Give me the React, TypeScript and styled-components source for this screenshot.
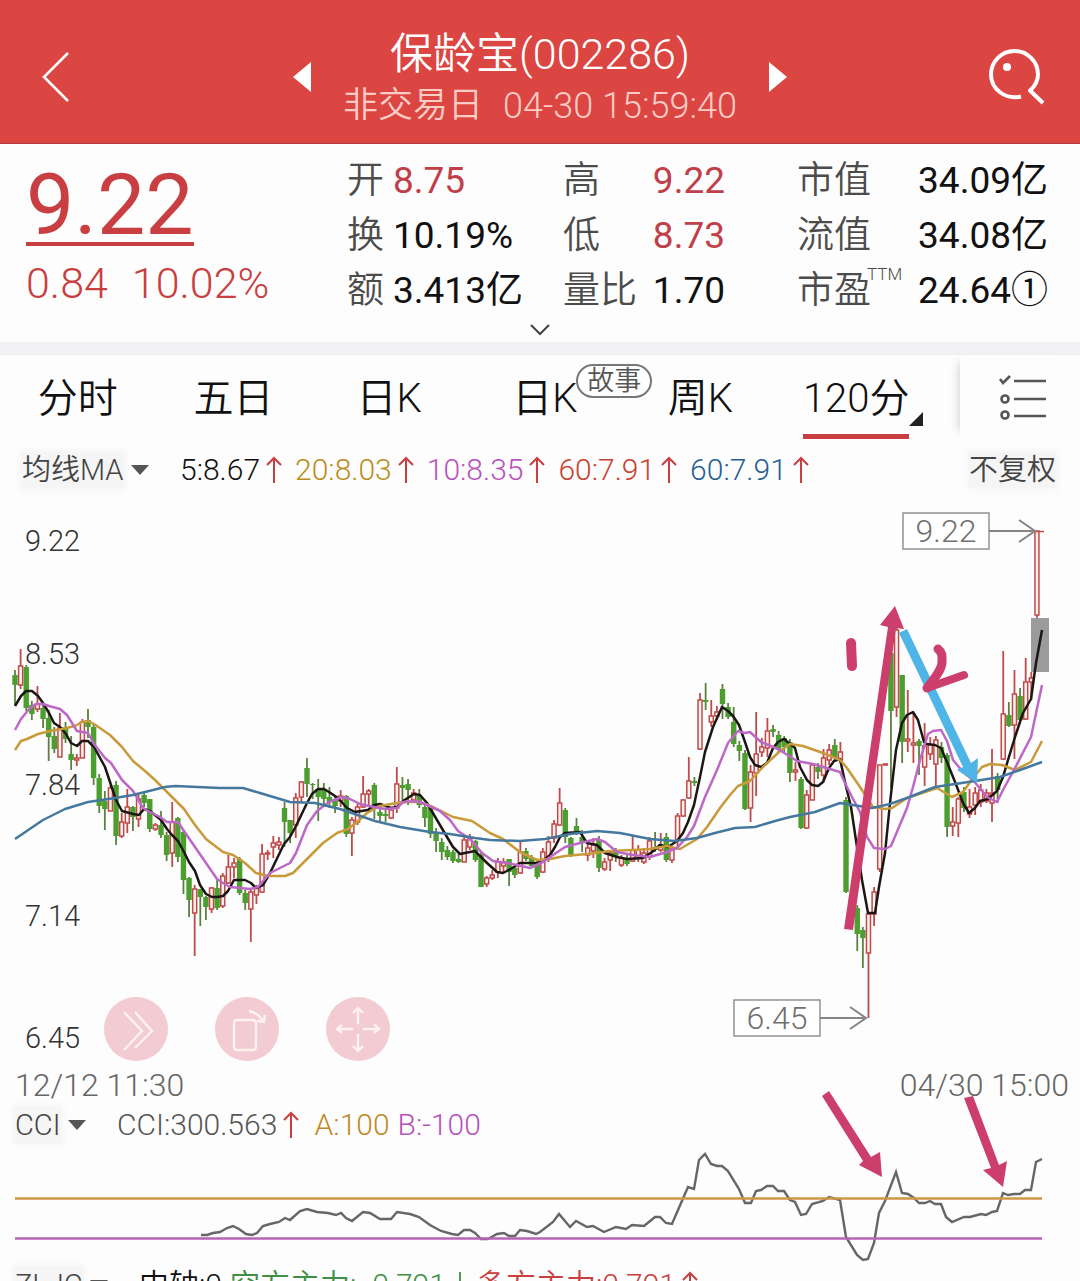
import React from "react";
import styled, { createGlobalStyle } from "styled-components";

const GlobalStyle = createGlobalStyle`
  *, *::before, *::after { box-sizing: border-box; }
  body { margin: 0; background: #fdfdfd; }
  button, select { font: inherit; color: inherit; background: none; border: 0; padding: 0; margin: 0; }
  button, select { cursor: pointer; }
  svg { display: block; }
`;

const red = "#c93f41";
const pink = "#cc3e6c";

const Page = styled.main`
  height: 100vh;
  overflow: hidden;
  background: #fdfdfd;
  color: #111;
  font-family: Roboto, "Noto Sans CJK SC", sans-serif;
  font-size: 29px;
  line-height: 40px;
`;

/* ---------- header ---------- */

const Header = styled.header`
  display: grid;
  grid-template-columns: 120px 1fr 120px;
  align-items: center;
  height: 144px;
  padding-top: 10px;
  background: #db4542;
  border-bottom: 1px solid #b23a45;
  color: #fff;
`;

const HeaderButton = styled.button<{ $end?: boolean }>`
  display: flex;
  justify-content: ${(p) => (p.$end ? "flex-end" : "flex-start")};
  padding: 0 35px 0 42px;
  svg { flex: none; }
`;

const Switcher = styled.div`
  display: flex;
  align-items: center;
  justify-content: center;
  gap: 32px;
`;

const TitleBlock = styled.div`
  padding-top: 3px;
  text-align: center;
`;

const Title = styled.h1`
  margin: 0;
  font-size: 43px;
  font-weight: 350;
  line-height: 56px;
`;

const Subtitle = styled.p`
  display: flex;
  justify-content: center;
  gap: 20px;
  margin: 0;
  color: #fcccc5;
  font-size: 35px;
  font-weight: 350;
  line-height: 48px;
  time { font-size: 36px; }
`;

/* ---------- quote ---------- */

const Quote = styled.section`
  display: grid;
  grid-template-columns: 321fr 701fr;
  padding: 8px 32px 0 26px;
`;

const PriceBlock = styled.div`
  display: flex;
  flex-direction: column;
  align-items: flex-start;
  padding-top: 16px;
  color: ${red};
`;

const Price = styled.strong`
  border-bottom: 4px solid ${red};
  font-size: 86px;
  font-weight: 400;
  line-height: 74px;
`;

const Change = styled.div`
  display: flex;
  gap: 24px;
  margin-top: 11px;
  font-size: 43px;
  font-weight: 350;
  line-height: 52px;
`;

const Stats = styled.div`
  display: grid;
  grid-template-columns: 216fr 234fr 251fr;
  padding-top: 1px;
`;

const StatColumn = styled.dl<{ $right?: number; $spread?: boolean }>`
  margin: 0;
  padding-right: ${(p) => p.$right ?? 0}px;
  div { justify-content: ${(p) => (p.$spread ? "space-between" : "flex-start")}; }
`;

const Stat = styled.div`
  display: flex;
  gap: 9px;
  font-size: 37px;
  line-height: 55px;
`;

const StatLabel = styled.dt`
  position: relative;
  color: #4c4c4c;
  font-weight: 350;
`;

const StatValue = styled.dd<{ $up?: boolean }>`
  margin: 0;
  color: ${(p) => (p.$up ? "#c0404a" : "#111")};
  white-space: nowrap;
`;

const Super = styled.sup`
  position: absolute;
  left: 70px;
  top: 1px;
  font-size: 17px;
  line-height: 20px;
`;

const ExpandButton = styled.button`
  display: flex;
  justify-content: center;
  width: 100%;
  height: 24px;
  padding-top: 6px;
`;

const Divider = styled.hr`
  height: 13px;
  margin: 0;
  border: 0;
  background: #f1f0f5;
`;

/* ---------- period tabs ---------- */

const TabBar = styled.nav`
  display: grid;
  grid-template-columns: 1fr 120px;
  height: 84px;
`;

const Tabs = styled.div`
  display: grid;
  grid-template-columns: repeat(6, 1fr);
  padding-right: 26px;
`;

const Tab = styled.button`
  display: flex;
  justify-content: center;
  font-size: 40px;
  font-weight: 350;
  line-height: 88px;
`;

const TabText = styled.span<{ $active?: boolean }>`
  position: relative;
  height: 84px;
  border-bottom: 5px solid ${(p) => (p.$active ? red : "transparent")};
`;

const TabBadge = styled.span`
  position: absolute;
  left: 64px;
  top: 9px;
  width: 76px;
  border: 2px solid #777;
  border-radius: 17px;
  color: #555;
  font-size: 27px;
  line-height: 30px;
`;

const Corner = styled.i`
  position: absolute;
  right: -14px;
  bottom: 8px;
  border-left: 14px solid transparent;
  border-bottom: 14px solid #222;
`;

const MenuButton = styled.button`
  display: flex;
  align-items: center;
  justify-content: center;
  padding-left: 5px;
  background: #fdfdfd;
  box-shadow: -8px 0 10px -8px #c8c8cc;
`;

/* ---------- indicator legends ---------- */

const Legend = styled.div<{ $left: number; $top?: number }>`
  display: flex;
  align-items: center;
  height: 40px;
  margin-top: ${(p) => p.$top ?? 0}px;
  padding: 0 24px 0 ${(p) => p.$left}px;
  font-weight: 350;
  white-space: nowrap;
`;

const Picker = styled.label`
  display: flex;
  align-items: center;
  gap: 7px;
  margin-right: 31px;
  color: #555;
`;

const PickerSelect = styled.select`
  appearance: none;
  height: 36px;
  background: #f5f5f5;
  box-shadow: 0 0 6px 2px #f5f5f5;
  color: #444;
  line-height: 36px;
  outline: 0;
`;

const Values = styled.div<{ $gap: number }>`
  display: flex;
  flex: 1;
  gap: ${(p) => p.$gap}px;
  font-size: 30px;
`;

const Value = styled.span<{ $color: string }>`
  display: flex;
  align-items: center;
  gap: 6px;
  color: ${(p) => p.$color};
`;

const AdjustButton = styled.button`
  height: 36px;
  background: #f5f5f5;
  box-shadow: 0 0 6px 2px #f5f5f5;
  color: #444;
  line-height: 36px;
`;

/* ---------- charts ---------- */

const ChartArea = styled.section`
  position: relative;
`;

const Plot = styled.svg`
  width: 100%;
  height: auto;
  overflow: visible;
`;

const Tools = styled.div`
  position: absolute;
  left: 104px;
  bottom: 4px;
  display: flex;
  gap: 47px;
`;

const ToolButton = styled.button`
  width: 64px;
  height: 64px;
  border-radius: 50%;
  background: #f3cbd2;
`;

const Dates = styled.div`
  display: flex;
  justify-content: space-between;
  padding: 0 11px 0 15px;
  color: #666;
  font-size: 32px;
  font-weight: 350;
`;

/* Each candle: high, body top, body bottom, low, rising (1) or falling (0). */
const candles: (number[] | null)[] = [
  [670,675,685,705,0],[649,666,685,689,1],[665,667,708,711,0],[701,705,714,720,0],[686,704,709,712,1],
  [705,708,719,728,0],[710,718,737,761,0],[727,736,749,753,0],[713,728,757,757,1],[722,727,739,743,0],
  [736,754,760,770,0],[754,758,760,766,1],[719,722,758,758,1],[709,720,727,738,0],[723,727,778,785,0],
  [774,778,806,813,0],[791,801,809,830,0],[785,788,811,811,1],[781,785,836,845,0],[813,822,836,838,1],
  [789,807,823,833,1],[806,807,817,831,0],[795,799,819,827,1],[792,795,803,807,0],[799,799,829,832,0],
  [823,825,829,831,1],[811,825,835,838,0],[832,835,855,861,0],[802,822,853,867,1],[817,818,857,862,0],
  [830,832,880,894,0],[877,878,900,917,0],[885,889,913,956,1],[889,889,897,926,0],[896,897,907,920,0],
  [887,888,909,913,1],[880,888,908,910,0],[873,876,906,908,1],[855,867,883,884,1],[858,863,867,878,1],
  [857,859,893,895,0],[890,893,903,910,0],[890,892,909,942,1],[885,888,895,904,1],[844,854,892,893,1],
  [850,853,854,860,1],[836,843,847,858,1],[837,842,845,850,1],[802,808,822,847,0],[820,820,833,843,0],
  [793,798,825,838,1],[781,782,797,803,1],[758,768,784,797,0],[783,784,785,799,0],[779,789,797,821,0],
  [783,789,799,804,0],[787,797,802,808,0],[795,800,806,813,0],[790,796,801,807,1],[795,796,834,837,0],
  [817,820,833,856,1],[803,807,822,825,1],[776,794,807,808,1],[789,791,794,807,1],[783,785,809,819,0],
  [808,812,816,822,0],[810,814,816,822,0],[807,810,818,819,1],[767,784,808,813,1],[777,785,788,800,0],
  [779,784,790,805,0],[789,793,800,803,1],[789,795,805,808,0],[803,807,818,827,0],[807,808,834,838,0],
  [828,832,841,852,0],[838,842,852,860,0],[846,850,857,860,0],[850,852,861,863,0],[853,859,862,863,0],
  [836,840,862,862,1],[834,838,847,850,1],[840,841,860,862,0],[852,855,887,887,0],[876,878,884,887,1],
  [870,875,878,880,1],[858,862,872,878,1],[858,862,866,873,1],[859,859,872,886,0],[865,868,875,878,0],
  [840,852,873,874,1],[848,851,859,861,0],[855,858,866,868,0],[860,862,877,879,0],[848,852,872,873,1],
  [836,842,858,862,1],[820,824,838,843,1],[788,803,825,826,1],[808,810,837,843,0],[837,838,855,857,0],
  [818,826,831,835,0],[830,837,843,852,0],[843,848,855,861,1],[838,845,851,858,1],[836,840,868,872,0],
  [858,862,869,871,1],[850,853,860,871,1],[848,851,857,862,0],[855,858,865,867,1],[855,859,864,866,0],
  [835,850,861,862,1],[845,850,858,862,1],[848,853,862,864,1],[837,841,857,860,1],[832,847,850,852,0],
  [833,845,850,852,1],[833,837,860,862,0],[847,848,860,863,1],[813,816,840,847,1],[799,800,816,817,1],
  [757,781,798,799,1],[777,781,783,786,0],[693,700,749,750,1],[683,700,702,710,0],[700,716,722,727,1],
  [706,712,716,720,1],[684,689,704,719,0],[703,707,717,719,0],[707,722,744,747,0],[741,745,751,761,0],
  [750,753,809,810,0],[765,772,808,822,1],[712,754,773,796,1],[738,747,752,757,1],[718,731,748,757,1],
  [725,729,732,737,0],[731,735,750,752,0],[736,738,747,752,0],[739,742,773,782,0],[762,770,772,781,1],
  [777,779,828,829,0],[790,795,828,829,1],[763,765,800,800,1],[763,767,772,779,0],[749,758,775,783,1],
  [744,750,760,765,1],[739,745,758,760,0],[742,752,760,763,1],[797,800,892,893,0],null,
  [905,908,934,951,0],[927,930,938,968,0],[912,914,953,1018,1],[887,892,914,926,1],[765,765,869,872,1],
  [764,764,765,765,1],[650,653,711,788,0],[627,630,707,717,1],[675,675,742,763,0],[690,739,741,752,1],
  [713,743,745,763,1],[739,741,746,775,0],[723,746,767,786,1],[737,745,754,760,1],[736,740,764,788,1],
  [742,747,758,763,0],[753,755,827,837,0],[807,822,826,836,1],[797,799,823,837,1],[787,792,808,812,0],
  [789,807,814,818,1],[787,793,805,815,1],[784,790,802,807,1],[789,793,801,803,1],[749,793,803,822,1],
  [773,776,790,803,0],[651,714,759,760,1],[702,715,726,727,0],[670,694,725,759,1],[688,696,720,722,0],
  [658,682,719,720,1],[672,678,682,700,1],[531,531,615,618,1],
];

const ma5 = "15,706 21,696 26,691 32,691 38,696 43,703 49,713 54,723 60,727 66,734 71,743 77,746 82,741 88,741 94,747 99,756 105,767 110,782 116,800 122,811 133,814 139,815 144,809 150,811 161,820 167,829 172,835 178,841 184,852 189,862 195,871 200,885 206,894 212,897 217,897 223,896 228,891 234,880 245,880 251,883 256,888 263,885 270,873 284,844 290,837 296,826 307,803 312,794 318,789 324,789 329,792 338,798 347,808 355,812 368,810 374,805 380,804 391,808 397,807 403,801 414,794 420,795 427,803 437,820 447,837 453,847 460,854 475,851 487,863 497,872 503,873 509,870 517,865 520,863 537,863 543,861 550,855 555,847 560,837 565,833 580,832 587,843 597,845 605,853 617,857 627,859 643,858 652,852 660,845 668,847 677,841 683,833 688,822 694,805 700,777 705,752 713,727 722,707 728,711 733,716 739,725 745,742 750,757 755,765 761,767 767,763 773,748 778,742 784,739 795,748 800,767 807,780 812,785 818,786 823,782 829,768 834,761 840,759 845,782 851,807 857,847 862,880 868,913 875,913 879,887 885,853 890,803 896,750 902,723 907,715 913,712 918,720 924,742 927,744 935,745 941,748 947,762 957,787 963,803 969,813 975,808 980,801 988,799 997,791 1003,777 1008,760 1015,737 1023,713 1031,699 1036,663 1042,630";
const ma10 = "15,730 21,719 30,708 36,704 43,704 49,706 60,709 67,715 77,731 88,733 94,744 105,758 111,763 122,780 133,791 143,808 150,812 160,817 167,822 178,822 184,831 195,847 206,863 217,879 223,883 230,887 250,889 258,887 270,873 290,863 296,853 307,825 317,811 329,802 342,797 350,799 360,804 374,807 385,809 397,808 403,802 417,801 427,805 440,811 450,820 458,831 467,837 473,842 482,853 493,861 507,863 517,865 530,868 543,862 553,855 565,847 580,843 597,839 605,842 617,852 633,855 650,857 667,852 677,848 687,837 694,826 705,797 717,770 728,743 738,731 745,733 750,732 761,742 778,749 797,761 813,764 840,772 845,783 852,797 860,812 867,837 874,848 885,849 891,846 907,808 913,787 920,760 928,734 933,731 941,730 947,741 953,760 963,772 973,780 987,797 997,802 1003,790 1015,768 1031,737 1042,685";
const ma20 = "15,750 21,741 27,739 38,734 50,731 62,729 75,726 82,722 88,721 94,724 110,735 122,747 133,761 145,771 155,780 167,792 184,809 195,825 206,839 223,852 233,855 245,863 256,873 268,876 285,876 293,873 307,859 323,843 337,833 348,829 357,822 367,813 380,806 397,803 407,802 420,802 433,807 453,817 472,821 490,833 503,839 520,852 537,860 550,859 565,856 587,854 610,851 633,850 650,849 667,846 680,849 697,839 707,827 720,808 730,795 738,786 750,781 763,767 780,751 790,744 803,746 823,753 840,760 847,768 860,787 873,807 885,809 892,808 907,798 937,788 952,797 963,792 973,778 982,767 990,764 1002,765 1015,770 1031,762 1042,741";
const ma60 = "15,839 43,820 65,809 88,802 115,798 133,795 165,787 175,786 220,788 243,788 260,793 290,802 315,803 340,809 375,821 400,827 430,832 450,834 475,838 490,840 520,841 545,839 570,834 597,831 620,833 650,839 675,841 697,838 715,833 735,828 755,827 775,821 790,817 815,812 840,803 872,808 890,804 907,798 935,787 975,781 1000,777 1020,770 1042,762";
const cci = "201,1235 207,1235 213,1233 220,1232 227,1228 233,1226 239,1229 246,1234 252,1235 257,1233 263,1226 270,1224 279,1222 285,1218 290,1220 300,1211 307,1209 317,1212 328,1213 336,1215 341,1213 346,1218 352,1221 363,1212 370,1213 380,1219 391,1219 397,1212 410,1214 419,1217 430,1225 441,1231 452,1234 458,1235 464,1230 470,1230 475,1233 481,1239 488,1239 497,1234 504,1233 509,1236 515,1236 520,1230 527,1231 536,1234 540,1232 553,1222 559,1214 570,1227 576,1221 587,1227 593,1226 604,1232 616,1227 626,1229 632,1225 644,1226 655,1217 660,1217 666,1223 672,1224 678,1210 688,1187 694,1189 699,1160 705,1154 711,1164 717,1166 722,1166 728,1171 739,1189 745,1203 751,1203 756,1191 761,1190 767,1186 773,1186 778,1191 784,1191 790,1200 795,1202 801,1215 806,1214 812,1204 823,1201 829,1197 840,1200 846,1237 857,1255 863,1260 868,1259 874,1243 879,1213 885,1201 896,1172 902,1193 908,1194 914,1198 919,1203 925,1203 930,1201 935,1204 941,1204 946,1217 952,1222 964,1217 970,1217 981,1214 986,1215 992,1212 997,1211 1003,1193 1008,1195 1014,1194 1020,1194 1025,1190 1031,1190 1036,1162 1042,1159";

const axis: [string, number][] = [["9.22", 551], ["8.53", 664], ["7.84", 795], ["7.14", 926], ["6.45", 1048]];

const Candles = () => (
  <g>
    {candles.map((c, i) => {
      if (!c) return null;
      const x = 15 + i * 5.615;
      const [hi, top, bottom, lo, up] = c;
      const height = Math.max(bottom - top, 1);
      return up ? (
        <g key={i} stroke="#bf4a4a">
          <path d={`M${x} ${hi}V${top}M${x} ${bottom}V${lo}`} strokeWidth="1.8" />
          <rect x={x - 2} y={top} width="4" height={height} fill="#fff2ee" strokeWidth="1.5" />
        </g>
      ) : (
        <g key={i}>
          <path d={`M${x} ${hi}V${lo}`} stroke="#5b8140" strokeWidth="1.8" />
          <rect x={x - 2.7} y={top} width="5.4" height={height} fill="#4c9f2f" />
        </g>
      );
    })}
  </g>
);

const PriceTag = ({ x, y, text }: { x: number; y: number; text: string }) => (
  <g>
    <rect x={x} y={y} width="86" height="36" fill="#fff" stroke="#8a8a8a" strokeWidth="1.4" />
    <text x={x + 43} y={y + 29} fill="#707070" fontSize="32" fontWeight="350" textAnchor="middle">{text}</text>
    <path d={`M${x + 86} ${y + 18}H${x + 131}M${x + 116} ${y + 7}L${x + 132} ${y + 18}L${x + 116} ${y + 29}`} fill="none" stroke="#858585" strokeWidth="2" />
  </g>
);

const Up = ({ color = red }: { color?: string }) => (
  <svg width="16" height="28" viewBox="0 0 16 28" fill="none" stroke={color} strokeWidth="2">
    <path d="M8 27V2M1 9L8 2L15 9" />
  </svg>
);

const Down = () => (
  <svg width="16" height="28" viewBox="0 0 16 28" fill="none" stroke="#4f9a55" strokeWidth="2">
    <path d="M8 1V26M1 19L8 26L15 19" />
  </svg>
);

const Caret = () => (
  <svg width="18" height="10" viewBox="0 0 18 10" fill="#555"><path d="M0 0H18L9 10Z" /></svg>
);

const IndicatorPicker = ({ name, label }: { name: string; label: string }) => (
  <Picker>
    <PickerSelect aria-label={label} defaultValue={name}><option>{name}</option></PickerSelect>
    <Caret />
  </Picker>
);

const averages: [string, string][] = [
  ["5:8.67", "#111"], ["20:8.03", "#b98d20"], ["10:8.35", "#b852bd"], ["60:7.91", "#c9402f"], ["60:7.91", "#255f94"],
];

export default function App() {
  return (
    <Page>
      <GlobalStyle />
      <Header>
        <HeaderButton aria-label="返回">
          <svg width="27" height="50" viewBox="0 0 27 50" fill="none" stroke="#fff" strokeWidth="2.6"><path d="M26 1L2 25L26 49" /></svg>
        </HeaderButton>
        <Switcher>
          <button aria-label="上一只">
            <svg width="18" height="30" viewBox="0 0 18 30" fill="#fff"><path d="M18 0V30L0 15Z" /></svg>
          </button>
          <TitleBlock>
            <Title>保龄宝(002286)</Title>
            <Subtitle><span>非交易日</span><time>04-30 15:59:40</time></Subtitle>
          </TitleBlock>
          <button aria-label="下一只">
            <svg width="18" height="30" viewBox="0 0 18 30" fill="#fff"><path d="M0 0V30L18 15Z" /></svg>
          </button>
        </Switcher>
        <HeaderButton $end aria-label="搜索">
          <svg width="56" height="56" viewBox="0 0 56 56" fill="none" stroke="#fff" strokeWidth="4">
            <path d="M32 47.500C16 51 2 40 2 25.500A23.500 23.500 0 0 1 49 25.500C49 32 46 37 41 41.500L54 54" strokeLinejoin="round" />
            <circle cx="18" cy="18" r="4" fill="#fff" stroke="none" />
          </svg>
        </HeaderButton>
      </Header>

      <Quote>
        <PriceBlock>
          <Price>9.22</Price>
          <Change><span>0.84</span><span>10.02%</span></Change>
        </PriceBlock>
        <Stats>
          <StatColumn>
            <Stat><StatLabel>开</StatLabel><StatValue $up>8.75</StatValue></Stat>
            <Stat><StatLabel>换</StatLabel><StatValue>10.19%</StatValue></Stat>
            <Stat><StatLabel>额</StatLabel><StatValue>3.413亿</StatValue></Stat>
          </StatColumn>
          <StatColumn $spread $right={72}>
            <Stat><StatLabel>高</StatLabel><StatValue $up>9.22</StatValue></Stat>
            <Stat><StatLabel>低</StatLabel><StatValue $up>8.73</StatValue></Stat>
            <Stat><StatLabel>量比</StatLabel><StatValue>1.70</StatValue></Stat>
          </StatColumn>
          <StatColumn $spread>
            <Stat><StatLabel>市值</StatLabel><StatValue>34.09亿</StatValue></Stat>
            <Stat><StatLabel>流值</StatLabel><StatValue>34.08亿</StatValue></Stat>
            <Stat><StatLabel>市盈<Super>TTM</Super></StatLabel><StatValue>24.64①</StatValue></Stat>
          </StatColumn>
        </Stats>
      </Quote>
      <ExpandButton aria-label="展开">
        <svg width="20" height="12" viewBox="0 0 20 12" fill="none" stroke="#444" strokeWidth="2"><path d="M1 1L10 10L19 1" /></svg>
      </ExpandButton>
      <Divider />

      <TabBar>
        <Tabs>
          <Tab><TabText>分时</TabText></Tab>
          <Tab><TabText>五日</TabText></Tab>
          <Tab><TabText>日K</TabText></Tab>
          <Tab><TabText>日K<TabBadge>故事</TabBadge></TabText></Tab>
          <Tab><TabText>周K</TabText></Tab>
          <Tab><TabText $active>120分<Corner /></TabText></Tab>
        </Tabs>
        <MenuButton aria-label="指标设置">
          <svg width="48" height="46" viewBox="0 0 48 46" fill="none" stroke="#555" strokeWidth="2.6">
            <path d="M15 7H47M15 25H47M15 42H47" />
            <path d="M1 5L4 9L11 2" />
            <circle cx="6" cy="25" r="3.500" />
            <circle cx="6" cy="41" r="3.500" />
          </svg>
        </MenuButton>
      </TabBar>

      <Legend $left={22} $top={11}>
        <IndicatorPicker name="均线MA" label="主图指标" />
        <Values $gap={13}>
          {averages.map(([text, color], i) => (
            <Value key={i} $color={color}>{text}<Up /></Value>
          ))}
        </Values>
        <AdjustButton>不复权</AdjustButton>
      </Legend>

      <ChartArea>
        <Plot viewBox="0 490 1080 575" role="img" aria-label="120分K线">
          <g fill="#333" fontSize="29" fontWeight="350">
            {axis.map(([text, y]) => <text key={text} x="25" y={y}>{text}</text>)}
          </g>
          <Candles />
          <rect x="1031" y="618" width="18" height="54" fill="#9b9b9b" />
          <path d="M1031 531.500H1044" stroke="#c9484a" strokeWidth="1.5" />
          <g fill="none" strokeWidth="2.5" strokeLinejoin="round">
            <polyline points={ma5} stroke="#1c1714" />
            <polyline points={ma20} stroke="#c89a3a" />
            <polyline points={ma10} stroke="#bd68c6" />
            <polyline points={ma60} stroke="#44789f" />
          </g>
          <PriceTag x={903} y={513} text="9.22" />
          <PriceTag x={734} y={1000} text="6.45" />
          <path d="M844 929L888 627L880 625L895 606L904 629L896 628L853 930Z" fill={pink} />
          <path d="M899 633L907 629L971 763L978 758L977 783L957 770L963 767Z" fill="#4fb4e6" />
          <g fill={pink} stroke={pink} strokeLinecap="round" strokeLinejoin="round">
            <path d="M851 643L852 666" strokeWidth="10" />
            <path d="M938 649C943 653 942 657 942 662C942 670 934 679 927 688" fill="none" strokeWidth="9" />
            <path d="M927 688L964 675" strokeWidth="8" />
          </g>
        </Plot>
        <Tools>
          <ToolButton aria-label="展开工具">
            <svg width="64" height="64" viewBox="0 0 64 64" fill="none" stroke="#fff3ec" strokeWidth="2.4"><path d="M20 15L38 34L20 53M31 15L48 34L31 51" /></svg>
          </ToolButton>
          <ToolButton aria-label="旋转屏幕">
            <svg width="64" height="64" viewBox="0 0 64 64" fill="none" stroke="#fff3ec" strokeWidth="2.4"><rect x="19" y="23" width="22" height="30" rx="3" /><path d="M34 14C42 16 46 19 48 25M42 24L49 25L50 18" /></svg>
          </ToolButton>
          <ToolButton aria-label="移动">
            <svg width="64" height="64" viewBox="0 0 64 64" fill="none" stroke="#fff3ec" strokeWidth="2.4"><path d="M32 11V27M32 37V54M11 32H27M37 32H53M27 16L32 11L37 16M27 49L32 54L37 49M16 28L11 32L16 36M48 27L53 32L48 36" /></svg>
          </ToolButton>
        </Tools>
      </ChartArea>

      <Dates><time>12/12 11:30</time><time>04/30 15:00</time></Dates>

      <Legend $left={15}>
        <IndicatorPicker name="CCI" label="副图指标一" />
        <Values $gap={8}>
          <Value $color="#555">CCI:300.563<Up /></Value>
          <Value $color="#bd8a26">&nbsp;A:100</Value>
          <Value $color="#b852bd">B:-100</Value>
        </Values>
      </Legend>
      <Plot viewBox="0 1145 1080 120" role="img" aria-label="CCI">
        <polyline points={cci} fill="none" stroke="#666" strokeWidth="2.4" />
        <path d="M15 1198.500H1042" stroke="#cf9648" strokeWidth="2.6" />
        <path d="M15 1238.500H1042" stroke="#b565b5" strokeWidth="2.6" />
        <path d="M822 1096L829 1091L871 1157L880 1152L882 1177L859 1165L863 1161Z" fill={pink} />
        <path d="M964 1098L973 1096L999 1165L1007 1161L1003 1187L983 1170L991 1168Z" fill={pink} />
      </Plot>

      <Legend $left={15}>
        <IndicatorPicker name="ZLJC" label="副图指标二" />
        <Values $gap={8}>
          <Value $color="#111">中轴:0</Value>
          <Value $color="#3f9046">空方主力: -0.791<Down /></Value>
          <Value $color={red}>多方主力:0.791<Up /></Value>
        </Values>
      </Legend>
    </Page>
  );
}
